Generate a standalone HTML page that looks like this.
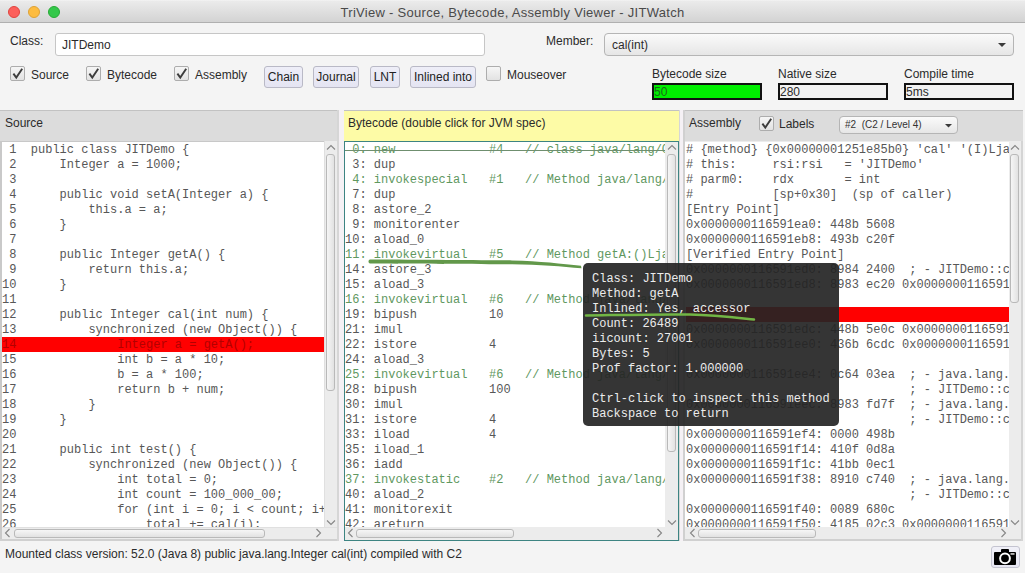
<!DOCTYPE html>
<html><head><meta charset="utf-8">
<style>
*{box-sizing:border-box;margin:0;padding:0}
html,body{width:1025px;height:573px;overflow:hidden;background:#f4f4f4;font-family:"Liberation Sans",sans-serif;font-size:12px;color:#2b2b2b;position:relative}
.a{position:absolute;white-space:pre}
#title{left:0;top:0;width:1025px;height:23px;background:linear-gradient(#f6f6f6 0,#ebebeb 1px,#d3d3d3 22px);border-bottom:1px solid #b0b0b0}
#title .t{left:0;width:1025px;top:5px;text-align:center;font-size:13px;letter-spacing:0.28px;color:#4a4a4a}
.tl{position:absolute;top:6px;width:12px;height:12px;border-radius:50%}
.field{background:#fff;border:1px solid #c6c6c6;border-radius:3px}
.combo{background:linear-gradient(#fafafa,#e6e6e6);border:1px solid #b5b5b5;border-radius:4px}
.cb{position:absolute;width:15px;height:15px;border:1px solid #adadad;border-radius:2px;background:linear-gradient(#f6f6f6,#e2e2e2)}
.cb svg{position:absolute;left:-1px;top:-1px}
.btn{position:absolute;height:22px;border:1px solid #b9b9c6;border-radius:3px;background:linear-gradient(#eeeef8,#e4e4f2);text-align:center;line-height:21px;font-size:12px;color:#222}
.box{position:absolute;height:17px;border:2px solid #111;background:#f2f2f2;line-height:14px;padding-left:0px;font-size:12px}
.hdr{position:absolute;top:110px;height:32px;background:#dcdcdc;border-top:1px solid #c2c2c2;border-bottom:1px solid #c8c8c8}
.hdr .lbl{position:absolute;top:5px;font-size:12px;color:#2b2b2b}
.code{position:absolute;font-family:"Liberation Mono",monospace;font-size:12px;line-height:15px;color:#575757;white-space:normal;overflow:hidden}
.code div{height:15px;padding-top:1px;white-space:pre}
.g{color:#5f985f}
.hl{background:#ff0000;color:#b30000}
.vs{position:absolute;background:#ececec;border-left:1px solid #e0e0e0}
.hs{position:absolute;background:#ececec;border-top:1px solid #e0e0e0}
.thumb{position:absolute;background:linear-gradient(90deg,#f6f6f6,#e2e2e2);border:1px solid #b9b9b9;border-radius:3px}
.thumbh{position:absolute;background:linear-gradient(#f6f6f6,#e2e2e2);border:1px solid #b9b9b9;border-radius:3px}
</style></head><body>

<div id="title" class="a">
  <div class="tl" style="left:8px;background:#fc605b;border:1px solid #e0443e"></div>
  <div class="tl" style="left:28px;background:#fdbc40;border:1px solid #dea236"></div>
  <div class="tl" style="left:48px;background:#34c84a;border:1px solid #27aa35"></div>
  <div class="a t">TriView - Source, Bytecode, Assembly Viewer - JITWatch</div>
</div>

<!-- top controls -->
<div class="a" style="left:10px;top:34px">Class:</div>
<div class="a field" style="left:55px;top:33px;width:430px;height:23px"></div>
<div class="a" style="left:62px;top:38px">JITDemo</div>

<div class="a" style="left:546px;top:34px">Member:</div>
<div class="a combo" style="left:604px;top:33px;width:410px;height:23px"></div>
<div class="a" style="left:612px;top:38px">cal(int)</div>
<svg class="a" style="left:997px;top:42px" width="10" height="6"><path d="M1 1 L9 1 L5 5 Z" fill="#3a3a3a"/></svg>

<div class="cb" style="left:10px;top:66px"><svg width="15" height="15"><path d="M3.4 7.6 L6.3 11.6 L12.2 2.8" stroke="#3c3c3c" stroke-width="1.9" fill="none"/></svg></div>
<div class="a" style="left:31px;top:68px">Source</div>
<div class="cb" style="left:86px;top:66px"><svg width="15" height="15"><path d="M3.4 7.6 L6.3 11.6 L12.2 2.8" stroke="#3c3c3c" stroke-width="1.9" fill="none"/></svg></div>
<div class="a" style="left:107px;top:68px">Bytecode</div>
<div class="cb" style="left:174px;top:66px"><svg width="15" height="15"><path d="M3.4 7.6 L6.3 11.6 L12.2 2.8" stroke="#3c3c3c" stroke-width="1.9" fill="none"/></svg></div>
<div class="a" style="left:195px;top:68px">Assembly</div>

<div class="btn" style="left:264px;top:66px;width:39px">Chain</div>
<div class="btn" style="left:313px;top:66px;width:46px">Journal</div>
<div class="btn" style="left:370px;top:66px;width:30px">LNT</div>
<div class="btn" style="left:410px;top:66px;width:66px">Inlined into</div>

<div class="cb" style="left:486px;top:66px"></div>
<div class="a" style="left:507px;top:68px">Mouseover</div>

<div class="a" style="left:652px;top:67px">Bytecode size</div>
<div class="box" style="left:652px;top:83px;width:110px;background:#00ee00;color:#1a6a1a">50</div>
<div class="a" style="left:778px;top:67px">Native size</div>
<div class="box" style="left:778px;top:83px;width:110px">280</div>
<div class="a" style="left:904px;top:67px">Compile time</div>
<div class="box" style="left:904px;top:83px;width:110px">5ms</div>

<!-- panels -->
<div class="hdr" style="left:0;width:339px"><div class="lbl" style="left:5px">Source</div></div>
<div class="hdr" style="left:343px;width:337px;background:#fdfba6"><div class="lbl" style="left:5px">Bytecode (double click for JVM spec)</div></div>
<div class="hdr" style="left:684px;width:339px"><div class="lbl" style="left:5px">Assembly</div></div>


<!-- SOURCE PANEL -->
<div class="a" style="left:0;top:141px;width:2px;height:400px;background:#c9c9c9"></div>
<div class="code" style="left:2px;top:142px;width:322px;height:385px;background:#fff"><div> 1  public class JITDemo {</div>
<div> 2      Integer a = 1000;</div>
<div> 3  </div>
<div> 4      public void setA(Integer a) {</div>
<div> 5          this.a = a;</div>
<div> 6      }</div>
<div> 7  </div>
<div> 8      public Integer getA() {</div>
<div> 9          return this.a;</div>
<div>10      }</div>
<div>11  </div>
<div>12      public Integer cal(int num) {</div>
<div>13          synchronized (new Object()) {</div>
<div class="hl">14              Integer a = getA();</div>
<div>15              int b = a * 10;</div>
<div>16              b = a * 100;</div>
<div>17              return b + num;</div>
<div>18          }</div>
<div>19      }</div>
<div>20  </div>
<div>21      public int test() {</div>
<div>22          synchronized (new Object()) {</div>
<div>23              int total = 0;</div>
<div>24              int count = 100_000_00;</div>
<div>25              for (int i = 0; i &lt; count; i++) {</div>
<div>26                  total += cal(i);</div></div>
<div class="vs" style="left:324px;top:141px;width:13px;height:386px"></div>
<div class="thumb" style="left:326px;top:154px;width:9px;height:237px"></div>
<svg class="a" style="left:326px;top:144px" width="10" height="7"><path d="M1 5.5 L5 1.5 L9 5.5" stroke="#858585" stroke-width="1.1" fill="none"/></svg>
<svg class="a" style="left:326px;top:519px" width="10" height="7"><path d="M1 1.5 L5 5.5 L9 1.5" stroke="#858585" stroke-width="1.1" fill="none"/></svg>
<div class="hs" style="left:2px;top:527px;width:335px;height:12px"></div>
<div class="thumbh" style="left:14px;top:529px;width:251px;height:9px"></div>
<svg class="a" style="left:4px;top:528px" width="7" height="10"><path d="M5.5 1 L1.5 5 L5.5 9" stroke="#858585" stroke-width="1.1" fill="none"/></svg>
<svg class="a" style="left:315px;top:528px" width="7" height="10"><path d="M1.5 1 L5.5 5 L1.5 9" stroke="#858585" stroke-width="1.1" fill="none"/></svg>
<div class="a" style="left:0;top:539px;width:339px;height:2px;background:#d0d0d0"></div>
<div class="a" style="left:337px;top:110px;width:2px;height:431px;background:#d6d6d6"></div>
<div class="a" style="left:339px;top:110px;width:5px;height:431px;background:#f5f1f5"></div>

<!-- BYTECODE PANEL -->
<div class="a" style="left:344px;top:141px;width:335px;height:400px;border:1px solid #3d8482;background:#ececec"></div>
<div class="code" style="left:345px;top:142px;width:320px;height:385px;background:#fff"><div class="g"> 0: new             #4   // class java/lang/Object</div><div> 3: dup</div><div class="g"> 4: invokespecial   #1   // Method java/lang/Object.&quot;&lt;init&gt;&quot;:()V</div><div> 7: dup</div><div> 8: astore_2</div><div> 9: monitorenter</div><div>10: aload_0</div><div class="g">11: invokevirtual   #5   // Method getA:()Ljava/lang/Integer;</div><div>14: astore_3</div><div>15: aload_3</div><div class="g">16: invokevirtual   #6   // Method java/lang/Integer.intValue:()I</div><div>19: bipush          10</div><div>21: imul</div><div>22: istore          4</div><div>24: aload_3</div><div class="g">25: invokevirtual   #6   // Method java/lang/Integer.intValue:()I</div><div>28: bipush          100</div><div>30: imul</div><div>31: istore          4</div><div>33: iload           4</div><div>35: iload_1</div><div>36: iadd</div><div class="g">37: invokestatic    #2   // Method java/lang/Integer.valueOf:(I)Ljava/lang/Integer;</div><div>40: aload_2</div><div>41: monitorexit</div><div>42: areturn</div></div>
<div class="a" style="left:345px;top:150px;width:320px;height:1px;background:#6f8f6f"></div>
<div class="thumb" style="left:667px;top:154px;width:9px;height:298px"></div>
<svg class="a" style="left:667px;top:144px" width="10" height="7"><path d="M1 5.5 L5 1.5 L9 5.5" stroke="#858585" stroke-width="1.1" fill="none"/></svg>
<svg class="a" style="left:667px;top:519px" width="10" height="7"><path d="M1 1.5 L5 5.5 L9 1.5" stroke="#858585" stroke-width="1.1" fill="none"/></svg>
<div class="thumbh" style="left:356px;top:529px;width:158px;height:9px"></div>
<svg class="a" style="left:347px;top:528px" width="7" height="10"><path d="M5.5 1 L1.5 5 L5.5 9" stroke="#858585" stroke-width="1.1" fill="none"/></svg>
<svg class="a" style="left:656px;top:528px" width="7" height="10"><path d="M1.5 1 L5.5 5 L1.5 9" stroke="#858585" stroke-width="1.1" fill="none"/></svg>
<div class="a" style="left:679px;top:110px;width:1px;height:431px;background:#d6d6d6"></div>
<div class="a" style="left:680px;top:110px;width:3px;height:431px;background:#f5f1f5"></div>
<div class="a" style="left:683px;top:110px;width:2px;height:431px;background:#d0d0d0"></div>

<!-- ASSEMBLY PANEL -->
<div class="a" style="left:685px;top:141px;width:337px;height:400px;background:#ececec"></div>
<div class="code" style="left:685px;top:142px;width:324px;height:385px;background:#fff;padding-left:1px"><div># {method} {0x00000001251e85b0} &#x27;cal&#x27; &#x27;(I)Ljava/lang/Integer;&#x27; in &#x27;JITDemo&#x27;</div>
<div># this:     rsi:rsi   = &#x27;JITDemo&#x27;</div>
<div># parm0:    rdx       = int</div>
<div>#           [sp+0x30]  (sp of caller)</div>
<div>[Entry Point]</div>
<div>0x0000000116591ea0: 448b 5608</div>
<div>0x0000000116591eb8: 493b c20f</div>
<div>[Verified Entry Point]</div>
<div>0x0000000116591ed0: 8984 2400  ; - JITDemo::cal@-1 (line 14)</div>
<div>0x0000000116591ed8: 8983 ec20 0x0000000116591f00</div>
<div>&nbsp;</div>
<div class="hl">&nbsp;</div>
<div>0x0000000116591edc: 448b 5e0c 0x0000000116591f00</div>
<div>0x0000000116591ee0: 436b 6cdc 0x0000000116591f00</div>
<div>&nbsp;</div>
<div>0x0000000116591ee4: 0c64 03ea  ; - java.lang.Integer::intValue</div>
<div>                               ; - JITDemo::cal@15 (line 15)</div>
<div>0x0000000116591eec: 8983 fd7f  ; - java.lang.Integer::intValue</div>
<div>                               ; - JITDemo::cal@15 (line 15)</div>
<div>0x0000000116591ef4: 0000 498b</div>
<div>0x0000000116591f14: 410f 0d8a</div>
<div>0x0000000116591f1c: 41bb 0ec1</div>
<div>0x0000000116591f38: 8910 c740  ; - java.lang.Integer::valueOf</div>
<div>                               ; - JITDemo::cal@37 (line 17)</div>
<div>0x0000000116591f40: 0089 680c</div>
<div>0x0000000116591f50: 4185 02c3 0x0000000116591f00</div></div>
<div class="thumb" style="left:1010px;top:154px;width:9px;height:149px"></div>
<svg class="a" style="left:1010px;top:144px" width="10" height="7"><path d="M1 5.5 L5 1.5 L9 5.5" stroke="#858585" stroke-width="1.1" fill="none"/></svg>
<svg class="a" style="left:1010px;top:519px" width="10" height="7"><path d="M1 1.5 L5 5.5 L9 1.5" stroke="#858585" stroke-width="1.1" fill="none"/></svg>
<div class="thumbh" style="left:698px;top:529px;width:118px;height:9px"></div>
<svg class="a" style="left:689px;top:528px" width="7" height="10"><path d="M5.5 1 L1.5 5 L5.5 9" stroke="#858585" stroke-width="1.1" fill="none"/></svg>
<svg class="a" style="left:1000px;top:528px" width="7" height="10"><path d="M1.5 1 L5.5 5 L1.5 9" stroke="#858585" stroke-width="1.1" fill="none"/></svg>
<div class="a" style="left:685px;top:539px;width:337px;height:2px;background:#d0d0d0"></div>
<div class="a" style="left:1021px;top:141px;width:2px;height:400px;background:#d4d4d4"></div>

<!-- assembly header controls -->
<div class="cb" style="left:759px;top:116px"><svg width="15" height="15"><path d="M3.4 7.6 L6.3 11.6 L12.2 2.8" stroke="#3c3c3c" stroke-width="1.9" fill="none"/></svg></div>
<div class="a" style="left:779px;top:117px">Labels</div>
<div class="a combo" style="left:839px;top:116px;width:119px;height:18px"></div>
<div class="a" style="left:845px;top:119px;font-size:10px;color:#333">#2  (C2 / Level 4)</div>
<svg class="a" style="left:944px;top:123px" width="9" height="6"><path d="M1 1 L8 1 L4.5 4.5 Z" fill="#3a3a3a"/></svg>

<!-- status -->
<div class="a" style="left:5px;top:547px">Mounted class version: 52.0 (Java 8) public java.lang.Integer cal(int) compiled with C2</div>
<div class="a" style="left:991px;top:546px;width:29px;height:22px;border:1px solid #c4c4d0;border-radius:3px;background:linear-gradient(#f0f0f8,#e6e6f2)"></div>
<svg class="a" style="left:991px;top:546px" width="29" height="22">
 <rect x="3" y="6" width="22" height="13" rx="1" fill="#000"/>
 <rect x="10" y="3" width="8" height="4" rx="1" fill="#000"/>
 <circle cx="14" cy="12.3" r="4.9" fill="none" stroke="#fff" stroke-width="2"/>
 <rect x="19.5" y="7.3" width="4" height="1.3" fill="#fff"/>
</svg>

<!-- TOOLTIP -->
<div class="a" style="left:583px;top:263px;width:256px;height:163px;border-radius:5px;background:rgba(36,36,36,0.92)"></div>
<div class="code" style="left:592px;top:271px;width:245px;height:155px;color:#ececec"><div>Class: JITDemo</div><div>Method: getA</div><div>Inlined: Yes, accessor</div><div>Count: 26489</div><div>iicount: 27001</div><div>Bytes: 5</div><div>Prof factor: 1.000000</div><div> </div><div>Ctrl-click to inspect this method</div><div>Backspace to return</div></div>

<!-- annotations -->
<svg class="a" style="left:0;top:0" width="1025" height="573">
 <path d="M370 259.4 C 420 259.6, 480 259.9, 512 260.4 C 540 261.1, 562 263.6, 581 265.7 L 581.5 268.3 C 562 266.7, 540 264.6, 512 264.3 C 480 263.9, 420 263.7, 370 263.4 C 368 263, 368 259.8, 370 259.4 Z" fill="#62984a"/>
 <path d="M586 315.5 C 620 315, 660 314, 690 314.5 C 715 315, 735 317.5, 754 319.5" stroke="#72b545" stroke-width="2.5" fill="none" stroke-linecap="round"/>
</svg>

</body></html>
